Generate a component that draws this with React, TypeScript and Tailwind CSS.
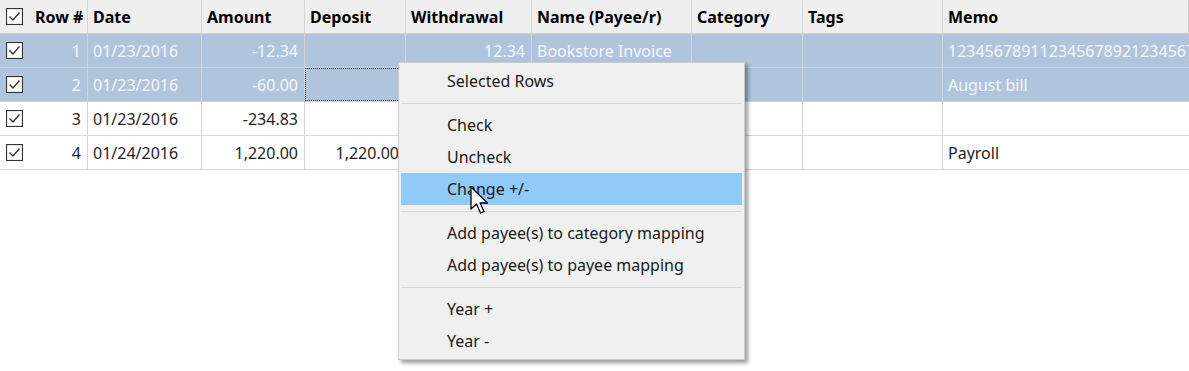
import React from "react";

const cols = [
  { key: "row", label: "Row #", w: "w-[88px]" },
  { key: "date", label: "Date", w: "w-[114px]" },
  { key: "amount", label: "Amount", w: "w-[103px]" },
  { key: "deposit", label: "Deposit", w: "w-[101px]" },
  { key: "withdrawal", label: "Withdrawal", w: "w-[126px]" },
  { key: "name", label: "Name (Payee/r)", w: "w-[160px]" },
  { key: "category", label: "Category", w: "w-[111px]" },
  { key: "tags", label: "Tags", w: "w-[140px]" },
  { key: "memo", label: "Memo", w: "flex-1" },
];

const rows = [
  { n: 1, date: "01/23/2016", amount: "-12.34", deposit: "", withdrawal: "12.34", name: "Bookstore Invoice", memo: "1234567891123456789212345678931234567894", selected: true },
  { n: 2, date: "01/23/2016", amount: "-60.00", deposit: "", withdrawal: "", name: "", memo: "August bill", selected: true, focus: true },
  { n: 3, date: "01/23/2016", amount: "-234.83", deposit: "", withdrawal: "", name: "", memo: "", selected: false },
  { n: 4, date: "01/24/2016", amount: "1,220.00", deposit: "1,220.00", withdrawal: "", name: "", memo: "Payroll", selected: false },
];

const CheckBox = () => (
  <svg width="17" height="17" viewBox="0 0 17 17" className="shrink-0">
    <rect x="0.5" y="0.5" width="16" height="16" fill="#fff" stroke="#333" strokeWidth="1.2" />
    <path d="M3.5 8.5 L7 12 L13.5 4.5" fill="none" stroke="#333" strokeWidth="1.4" />
  </svg>
);

const Cursor = () => (
  <svg width="22" height="30" viewBox="0 0 22 30">
    <path
      d="M1 1 L1 23 L6.5 18 L10.5 27 L14 25.5 L10 17 L17.5 17 Z"
      fill="#fff"
      stroke="#000"
      strokeWidth="1.3"
      strokeLinejoin="round"
    />
  </svg>
);

const MenuItem = ({ label, active }: { label: string; active?: boolean }) => (
  <div
    className={`h-[32px] flex items-center pl-[46px] mx-[2px] ${
      active ? "bg-[#91c9f7]" : ""
    }`}
  >
    {label}
  </div>
);

const Sep = () => (
  <div className="h-[12px] flex items-center mx-[2px]">
    <div className="w-full h-[1px] bg-[#d7d7d7]" />
  </div>
);

export default function App() {
  return (
    <div
      className="relative w-[1189px] h-[371px] bg-white overflow-hidden text-[16px] text-[#1e1e1e]"
      style={{ fontFamily: '"Noto Sans", "Open Sans", sans-serif' }}
    >
      {/* header */}
      <div className="flex h-[34px] bg-[#efefef] border-b border-[#cfcfcf] font-bold text-black">
        {cols.map((c) =>
          c.key === "row" ? (
            <div key={c.key} className={`${c.w} flex items-center border-r border-[#d4d4d4] pl-[6px]`}>
              <CheckBox />
              <span className="ml-[12px]">{c.label}</span>
            </div>
          ) : (
            <div key={c.key} className={`${c.w} flex items-center pl-[5px] border-r border-[#d4d4d4]`}>
              {c.label}
            </div>
          )
        )}
      </div>

      {/* rows */}
      {rows.map((r) => (
        <div
          key={r.n}
          className={`flex h-[34px] border-b ${
            r.selected
              ? "bg-[#b0c4de] text-[#f4f7fb] border-[#c9d3e1]"
              : "bg-white border-[#d8d8d8]"
          }`}
        >
          <div className="w-[88px] flex items-center pl-[6px] pr-[6px] border-r border-[#d4d4d4]">
            <CheckBox />
            <span className="ml-auto">{r.n}</span>
          </div>
          <div className="w-[114px] flex items-center pl-[5px] border-r border-[#d4d4d4]">{r.date}</div>
          <div className="w-[103px] flex items-center justify-end pr-[6px] border-r border-[#d4d4d4]">{r.amount}</div>
          <div
            className={`w-[101px] flex items-center justify-end pr-[6px] whitespace-nowrap overflow-hidden ${
              r.focus ? "border border-dotted border-[#222]" : "border-r border-[#d4d4d4]"
            }`}
          >
            {r.deposit}
          </div>
          <div className="w-[126px] flex items-center justify-end pr-[6px] border-r border-[#d4d4d4]">{r.withdrawal}</div>
          <div className="w-[160px] flex items-center pl-[5px] border-r border-[#d4d4d4]">{r.name}</div>
          <div className="w-[111px] flex items-center border-r border-[#d4d4d4]"></div>
          <div className="w-[140px] flex items-center border-r border-[#d4d4d4]"></div>
          <div className="flex-1 flex items-center pl-[5px] whitespace-nowrap overflow-hidden">{r.memo}</div>
        </div>
      ))}

      {/* context menu */}
      <div className="absolute left-[398px] top-[62px] w-[347px] py-[2px] bg-[#f0f0f0] border border-[#cccccc] shadow-[3px_3px_4px_rgba(0,0,0,0.4)] text-[16px] text-[#1a1a1a]">
        <MenuItem label="Selected Rows" />
        <Sep />
        <MenuItem label="Check" />
        <MenuItem label="Uncheck" />
        <MenuItem label="Change +/-" active />
        <Sep />
        <MenuItem label="Add payee(s) to category mapping" />
        <MenuItem label="Add payee(s) to payee mapping" />
        <Sep />
        <MenuItem label="Year +" />
        <MenuItem label="Year -" />
      </div>

      <div className="absolute left-[470px] top-[186px]">
        <Cursor />
      </div>
    </div>
  );
}
